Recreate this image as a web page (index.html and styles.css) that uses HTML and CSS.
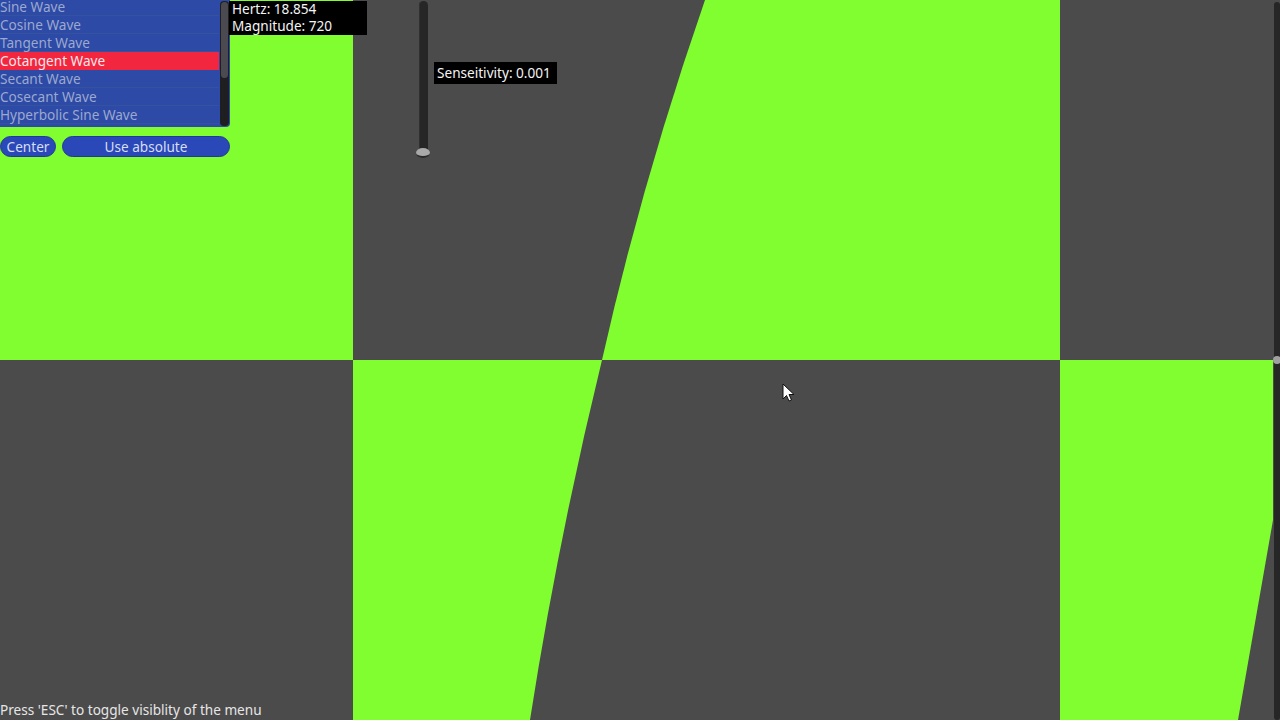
FILE: index.html
```html
<!DOCTYPE html>
<html>
<head>
<meta charset="utf-8">
<link rel="stylesheet" href="styles.css">
</head>
<body>
<div class="stage">
  <svg class="plot" viewBox="0 0 1280 720" width="1280" height="720">
    <rect x="0" y="0" width="1280" height="720" fill="#4b4b4b"/>
    <rect x="0" y="0" width="353" height="360" fill="#80fe2f"/>
    <path d="M705,0 L1060,0 L1060,360 L602,360 Q642.5,180 705,0 Z" fill="#80fe2f"/>
    <path d="M353,360 L602,360 Q558,540 530,720 L353,720 Z" fill="#80fe2f"/>
    <path d="M1060,360 L1273,360 L1273,520 L1238,720 L1060,720 Z" fill="#80fe2f"/>
    <rect x="1274" y="2" width="6" height="718" rx="3" fill="#262626"/>
    <ellipse cx="1277" cy="360" rx="4" ry="4" fill="#a0a0a0"/>
  </svg>

  <div class="hud">
    <div class="menu">
      <div class="list">
        <div class="rows">
          <div class="row">Sine Wave</div>
          <div class="row">Cosine Wave</div>
          <div class="row">Tangent Wave</div>
          <div class="row selected">Cotangent Wave</div>
          <div class="row">Secant Wave</div>
          <div class="row">Cosecant Wave</div>
          <div class="row">Hyperbolic Sine Wave</div>
        </div>
        <div class="scroll"><div class="thumb"></div></div>
      </div>
      <div class="buttons">
        <div class="btn btn-center">Center</div>
        <div class="btn btn-abs">Use absolute</div>
      </div>
    </div>
    <div class="info">
      <div class="info-line">Hertz: 18.854</div>
      <div class="info-line">Magnitude: 720</div>
    </div>
    <div class="slider">
      <div class="track"></div>
      <div class="grabber"></div>
    </div>
    <div class="sens">Senseitivity: 0.001</div>
  </div>

  <svg class="cursor" viewBox="0 0 14 20" width="14" height="20">
    <path d="M1,1 L1,16 L4.5,12.5 L7,18 L9.5,17 L7,11.5 L12,11.5 Z" fill="#ffffff" stroke="#111" stroke-width="1" stroke-linejoin="round"/>
  </svg>

  <div class="footer">Press 'ESC' to toggle visiblity of the menu</div>
</div>
</body>
</html>
```

FILE: styles.css
```css
html, body {
  margin: 0;
  padding: 0;
}
body {
  width: 1280px;
  height: 720px;
  overflow: hidden;
  background: #4b4b4b;
  font-family: "Noto Sans", "DejaVu Sans", sans-serif;
  font-size: 13.6px;
}
.stage {
  position: relative;
  width: 1280px;
  height: 720px;
  overflow: hidden;
}
.plot {
  position: absolute;
  left: 0;
  top: 0;
  display: block;
}
.hud {
  position: absolute;
  left: 0;
  top: 0;
  display: flex;
  align-items: flex-start;
}
.menu {
  width: 230px;
  display: flex;
  flex-direction: column;
}
.list {
  height: 127px;
  background: #2c4aa6;
  border-bottom-right-radius: 4px;
  display: flex;
  overflow: hidden;
}
.rows {
  width: 219px;
  margin-top: -2px;
  display: flex;
  flex-direction: column;
}
.row {
  height: 18px;
  line-height: 17px;
  color: #9da8cf;
  white-space: nowrap;
  border-bottom: 1px solid #35529f;
  box-sizing: border-box;
}
.row.selected {
  background: #f2263f;
  color: #fbe6ea;
  border-bottom-color: #f2263f;
}
.scroll {
  width: 9px;
  margin: 1px 0 0 1px;
  height: 125px;
  background: #1f1f22;
  border-radius: 4px;
  display: flex;
  flex-direction: column;
}
.thumb {
  height: 76px;
  background: #4a4a50;
  border-radius: 4px;
  margin: 1px 1px 0;
}
.buttons {
  display: flex;
  gap: 6px;
  margin-top: 9px;
}
.btn {
  height: 21px;
  line-height: 19px;
  box-sizing: border-box;
  border-radius: 11px;
  background: #2a48b8;
  border: 1px solid #22389a;
  color: #d6def6;
  text-align: center;
}
.btn-center {
  width: 56px;
}
.btn-abs {
  width: 168px;
}
.info {
  width: 138px;
  height: 34px;
  margin-top: 1px;
  margin-left: -1px;
  background: #000;
  color: #f4f4f4;
  padding-left: 3px;
  box-sizing: border-box;
  display: flex;
  flex-direction: column;
}
.info-line {
  height: 17px;
  line-height: 15px;
  white-space: nowrap;
}
.slider {
  margin-left: 49px;
  width: 14px;
  height: 158px;
  display: flex;
  flex-direction: column;
  align-items: center;
}
.track {
  width: 9px;
  height: 153px;
  margin-top: 1px;
  background: #262626;
  border-radius: 5px;
  box-shadow: inset 1px 0 0 #303030;
}
.grabber {
  width: 14px;
  height: 10px;
  margin-top: -6px;
  border-radius: 50%;
  background: #a9a9a9;
  border-bottom: 2px solid #2a2a2a;
  box-sizing: border-box;
}
.sens {
  margin-top: 62px;
  margin-left: 4px;
  background: #000;
  color: #f4f4f4;
  height: 22px;
  line-height: 22px;
  padding: 0 3px;
  width: 123px;
  box-sizing: border-box;
  white-space: nowrap;
}
.cursor {
  position: absolute;
  left: 782px;
  top: 383px;
}
.footer {
  position: absolute;
  left: 0;
  bottom: 0;
  height: 20px;
  line-height: 20px;
  color: #e6e6e6;
  white-space: nowrap;
}
```
